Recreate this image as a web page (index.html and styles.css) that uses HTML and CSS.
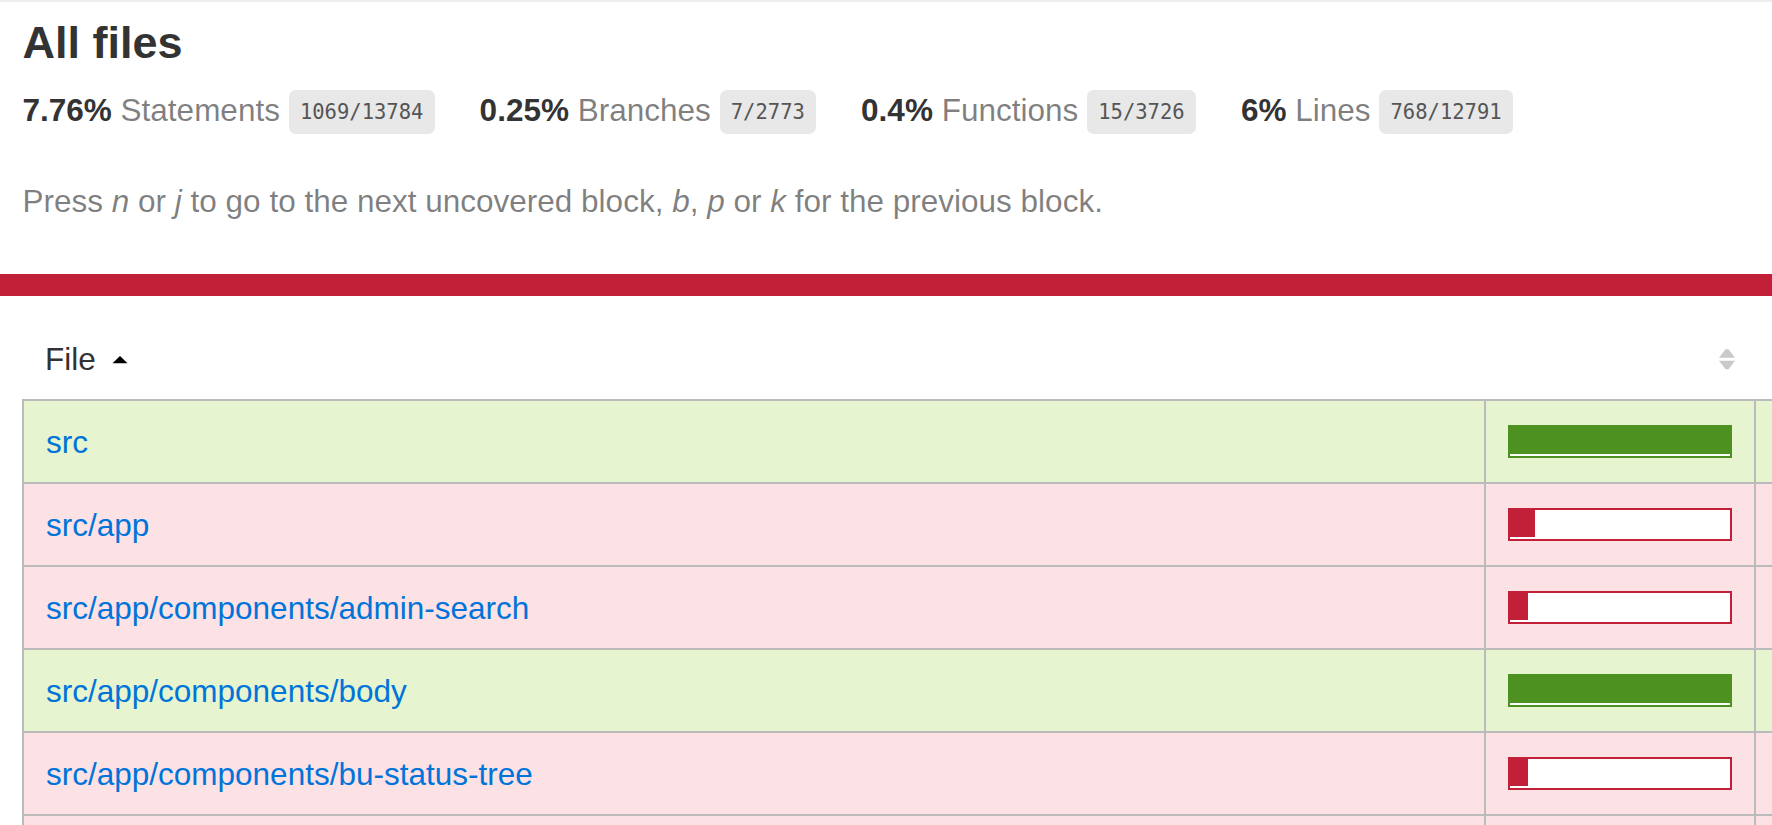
FILE: index.html
```html
<!doctype html>
<html lang="en">
<head>
<meta charset="utf-8">
<title>Code coverage report for All files</title>
<link rel="stylesheet" href="styles.css">
</head>
<body>
<div class="wrapper">
  <div class="header">
    <h1 class="title">All files</h1>
    <div class="stats">
      <div class="stat"><span class="strong">7.76% </span> <span class="quiet">Statements</span> <span class="fraction">1069/13784</span></div>
      <div class="stat"><span class="strong">0.25% </span> <span class="quiet">Branches</span> <span class="fraction">7/2773</span></div>
      <div class="stat"><span class="strong">0.4% </span> <span class="quiet">Functions</span> <span class="fraction">15/3726</span></div>
      <div class="stat"><span class="strong">6% </span> <span class="quiet">Lines</span> <span class="fraction">768/12791</span></div>
    </div>
    <p class="quiet hint">Press <em>n</em> or <em>j</em> to go to the next uncovered block, <em>b</em>, <em>p</em> or <em>k</em> for the previous block.</p>
  </div>
  <div class="status-line low"></div>
  <div class="content">
    <table class="coverage-summary">
      <thead>
        <tr>
          <th class="file col-file">File<span class="sorter"><svg class="sort-icon" viewBox="0 0 16 22" width="16" height="22"><polygon points="0.5,15 8,7.8 15.5,15" fill="#000"/></svg></span></th>
          <th class="pic col-pic"><span class="sorter"><svg class="sort-icon" viewBox="0 0 16 22" width="16" height="22"><polygon points="0,9.5 6.5,1 9.5,1 16,9.5" fill="#c9c9c9"/><polygon points="0,12.5 16,12.5 9.5,21 6.5,21" fill="#c9c9c9"/></svg></span></th>
          <th class="pct col-n">Statements</th>
          <th class="abs col-n"></th>
          <th class="pct col-n">Branches</th>
          <th class="abs col-n"></th>
          <th class="pct col-n">Functions</th>
          <th class="abs col-n"></th>
          <th class="pct col-n">Lines</th>
          <th class="abs col-n"></th>
        </tr>
      </thead>
      <tbody>
        <tr class="high">
          <td class="file"><a href="#">src</a></td>
          <td class="pic"><div class="chart"><div class="cover-fill" style="width:100%"></div><div class="cover-empty" style="width:0%"></div></div></td>
          <td class="pct">100%</td><td class="abs">4/4</td><td class="pct">100%</td><td class="abs">0/0</td><td class="pct">100%</td><td class="abs">0/0</td><td class="pct">100%</td><td class="abs">3/3</td>
        </tr>
        <tr class="low">
          <td class="file"><a href="#">src/app</a></td>
          <td class="pic"><div class="chart"><div class="cover-fill" style="width:11%"></div><div class="cover-empty" style="width:89%"></div></div></td>
          <td class="pct">10.81%</td><td class="abs">12/111</td><td class="pct">0%</td><td class="abs">0/4</td><td class="pct">0%</td><td class="abs">0/21</td><td class="pct">8.51%</td><td class="abs">8/94</td>
        </tr>
        <tr class="low">
          <td class="file"><a href="#">src/app/components/admin-search</a></td>
          <td class="pic"><div class="chart"><div class="cover-fill" style="width:8%"></div><div class="cover-empty" style="width:92%"></div></div></td>
          <td class="pct">7.89%</td><td class="abs">6/76</td><td class="pct">0%</td><td class="abs">0/18</td><td class="pct">0%</td><td class="abs">0/21</td><td class="pct">5.8%</td><td class="abs">4/69</td>
        </tr>
        <tr class="high">
          <td class="file"><a href="#">src/app/components/body</a></td>
          <td class="pic"><div class="chart"><div class="cover-fill" style="width:100%"></div><div class="cover-empty" style="width:0%"></div></div></td>
          <td class="pct">100%</td><td class="abs">6/6</td><td class="pct">100%</td><td class="abs">0/0</td><td class="pct">100%</td><td class="abs">1/1</td><td class="pct">100%</td><td class="abs">4/4</td>
        </tr>
        <tr class="low">
          <td class="file"><a href="#">src/app/components/bu-status-tree</a></td>
          <td class="pic"><div class="chart"><div class="cover-fill" style="width:8%"></div><div class="cover-empty" style="width:92%"></div></div></td>
          <td class="pct">7.69%</td><td class="abs">8/104</td><td class="pct">0%</td><td class="abs">0/22</td><td class="pct">0%</td><td class="abs">0/27</td><td class="pct">5.49%</td><td class="abs">5/91</td>
        </tr>
        <tr class="low">
          <td class="file"><a href="#">src/app/components/bu-tree</a></td>
          <td class="pic"><div class="chart"><div class="cover-fill" style="width:8%"></div><div class="cover-empty" style="width:92%"></div></div></td>
          <td class="pct">7.5%</td><td class="abs">6/80</td><td class="pct">0%</td><td class="abs">0/16</td><td class="pct">0%</td><td class="abs">0/20</td><td class="pct">5.4%</td><td class="abs">4/74</td>
        </tr>
      </tbody>
    </table>
  </div>
</div>
</body>
</html>
```

FILE: styles.css
```css
*, *::before, *::after { box-sizing: border-box; }

html {
  margin: 0;
  padding: 0;
  overflow: hidden;
}

body {
  margin: 0;
  padding: 0;
  border-top: 2px solid #eeeeee;
  font-family: "Liberation Sans", Arial, sans-serif;
  font-size: 31.5px;
  color: #333;
  background: #fff;
}

a { color: #0074D9; text-decoration: none; }

.header {
  padding: 15px 22.5px 22.5px 22.5px;
}

.title {
  font-size: 45px;
  font-weight: bold;
  margin: 0;
}

.stats {
  display: flow-root;
}

.stat {
  float: left;
  padding: 22.5px 45px 22.5px 0;
  white-space: nowrap;
}

.strong { font-weight: bold; }

.quiet { color: rgba(0, 0, 0, 0.5); }

.fraction {
  font-family: "DejaVu Sans Mono", "Liberation Mono", monospace;
  font-size: 20.5px;
  color: #555;
  background: #E8E8E8;
  padding: 10px 11.25px;
  border-radius: 6.75px;
  vertical-align: middle;
}

.hint {
  margin: 31.5px 0;
}

.status-line {
  height: 22.5px;
}

.status-line.low { background: #C21F39; }

.content {
  padding: 22.5px 22.5px 22.5px 21.5px;
}

.coverage-summary {
  border-collapse: separate;
  border-spacing: 0;
  table-layout: fixed;
  width: 3063.5px;
  line-height: 36px;
}

.col-file { width: 1463.5px; }
.col-pic { width: 270px; }
.col-n { width: 166px; }

.coverage-summary th {
  padding: 22.5px 22.5px 22px 23.5px;
  text-align: left;
  font-weight: normal;
  white-space: nowrap;
}

.coverage-summary th.pic,
.coverage-summary th.pct,
.coverage-summary td.pct,
.coverage-summary td.abs {
  text-align: right;
}

.coverage-summary th.pic { padding-right: 21.5px; }

.coverage-summary td {
  padding: 22.5px;
  border-right: 2px solid #bbb;
  border-bottom: 2px solid #bbb;
  white-space: nowrap;
  vertical-align: middle;
}

.coverage-summary td:first-child { border-left: 2px solid #bbb; }
.coverage-summary tbody tr:first-child td { border-top: 2px solid #bbb; }
.coverage-summary td:last-child { border-right: 2px solid #bbb; }

.sorter {
  display: inline-block;
  width: 16px;
  height: 22.5px;
  margin-left: 15.75px;
  vertical-align: baseline;
}

.pic .sorter { margin-left: 0; }

.sort-icon {
  display: block;
  width: 16px;
  height: 22.5px;
}

.low { background: #FCE1E5; }
.high { background: rgb(230, 245, 208); }

.chart {
  display: flex;
  align-items: flex-start;
  height: 32.5px;
  padding-bottom: 1.5px;
  background: #fff;
  line-height: 0;
}

.low .chart { border: 2px solid #C21F39; }
.high .chart { border: 2px solid rgb(77, 146, 33); }

.cover-fill, .cover-empty {
  height: 27px;
  flex: none;
}

.low .cover-fill { background: #C21F39; }
.high .cover-fill { background: rgb(77, 146, 33); }
.cover-empty { background: #fff; }
```
